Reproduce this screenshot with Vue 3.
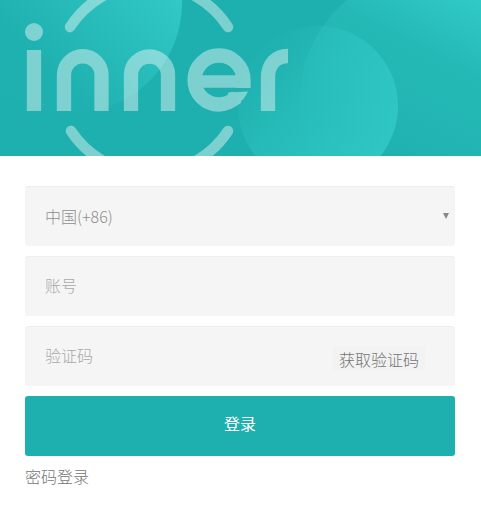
<script setup>
const ringArcs = [
  'M70 27 A94 94 0 0 1 228 27',
  'M71 131 A94 94 0 0 0 228 131'
]
</script>

<template>
  <div class="page">
    <header class="banner">
      <svg class="art" viewBox="0 0 481 156" width="481" height="156" role="img" aria-label="inner">
        <defs>
          <linearGradient id="blobA" x1="0" y1="1" x2="1" y2="0">
            <stop offset="0.3" stop-color="#1fb1af" />
            <stop offset="0.75" stop-color="#31c8c5" />
          </linearGradient>
          <linearGradient id="blobB" gradientUnits="userSpaceOnUse" x1="250" y1="40" x2="380" y2="156">
            <stop offset="0.15" stop-color="#3edbd6" stop-opacity="0.04" />
            <stop offset="0.45" stop-color="#3edbd6" stop-opacity="0.25" />
            <stop offset="1" stop-color="#3edbd6" stop-opacity="0.5" />
          </linearGradient>
          <linearGradient id="blobC" gradientUnits="userSpaceOnUse" x1="400" y1="156" x2="481" y2="0">
            <stop offset="0" stop-color="#3edbd6" stop-opacity="0.03" />
            <stop offset="0.3" stop-color="#3edbd6" stop-opacity="0.14" />
            <stop offset="0.6" stop-color="#3edbd6" stop-opacity="0.2" />
            <stop offset="1" stop-color="#3edbd6" stop-opacity="0.6" />
          </linearGradient>
        </defs>
        <rect width="481" height="156" fill="#1eb0ae" />
        <circle cx="72" cy="3" r="110" fill="url(#blobA)" />
        <circle cx="318" cy="106" r="80" fill="url(#blobB)" />
        <circle cx="430" cy="100" r="130" fill="url(#blobC)" />
        <g class="mark">
          <path v-for="d in ringArcs" :key="d" :d="d" class="ring" />
          <circle cx="34" cy="32" r="9" class="dot" />
          <path d="M34 111 V50" />
          <path d="M64 111 V75 A18.75 18.75 0 0 1 101.5 75 V111" />
          <path d="M131 111 V75 A18.5 18.5 0 0 1 168 75 V111" />
          <path class="bar" d="M195 81.500 H245" />
          <path d="M243.500 88 V80 A24.500 24.500 0 0 0 194.500 80 A24.500 24.500 0 0 0 219 104.500 C226 104.500 232 101 237 97" />
          <path class="tip" d="M228 92.500 L248 91.500 C244 100 238 105 230 108 Z" />
          <path d="M268 111 V78 C268 64 276 56 288 56" />
        </g>
      </svg>
    </header>

    <form class="form" @submit.prevent>
      <div class="field select">
        <span class="value">中国(+86)</span>
        <span class="caret"></span>
      </div>
      <div class="field">
        <input class="input" type="text" placeholder="账号" />
      </div>
      <div class="field code">
        <input class="input" type="text" placeholder="验证码" />
        <button class="send" type="button">获取验证码</button>
      </div>
      <button class="submit" type="submit">登录</button>
      <a class="alt" href="#">密码登录</a>
    </form>
  </div>
</template>

<style>
html, body { margin: 0; background: #fff; }
</style>

<style scoped>
.page {
  width: 481px;
  height: 507px;
  overflow: hidden;
  background: #fff;
  font-family: "Noto Sans CJK SC", "Liberation Sans", sans-serif;
  font-size: 16px;
  font-weight: 300;
}
.banner { height: 156px; }
.art { display: block; }
.mark { opacity: 0.42; }
.mark path { fill: none; stroke: #fff; stroke-width: 14.3; }
.mark .ring { stroke-width: 10.5; stroke-linecap: round; }
.mark .bar { stroke-width: 12.5; }
.mark .tip { fill: #fff; stroke: none; }
.mark .dot { fill: #fff; }

.form {
  display: flex;
  flex-direction: column;
  gap: 10px;
  padding: 30px 26px 0 25px;
}
.field {
  display: flex;
  align-items: center;
  box-sizing: border-box;
  height: 60px;
  padding: 0 20px;
  position: relative;
  background: #f5f5f5;
  border-top: 1px solid #eeeeee;
  border-radius: 3px;
}
.value { color: #8f8f8f; line-height: 60px; margin-top: -2px; }
.caret {
  position: absolute;
  right: 6px;
  top: 26px;
  width: 0;
  height: 0;
  border-left: 3px solid transparent;
  border-right: 3px solid transparent;
  border-top: 6px solid #888;
}
.input {
  flex: 1;
  min-width: 0;
  margin-top: -4px;
  padding: 0;
  border: 0;
  outline: 0;
  background: transparent;
  font: inherit;
  color: #999;
}
.input::placeholder { color: #a8a8a8; opacity: 1; }
.send {
  align-self: flex-start;
  margin: 20px 10px 0 0;
  padding: 0 6px;
  height: 24px;
  border: 0;
  background: #f2f2f2;
  color: #757575;
  font: inherit;
  line-height: 23px;
}
.submit {
  height: 60px;
  border: 0;
  border-radius: 3px;
  background: #1eb0ae;
  color: #fff;
  font: inherit;
  font-weight: 400;
  padding: 0 0 7px;
}
.alt {
  align-self: flex-start;
  margin-top: -1px;
  color: #757575;
  text-decoration: none;
  line-height: 22px;
}
</style>
